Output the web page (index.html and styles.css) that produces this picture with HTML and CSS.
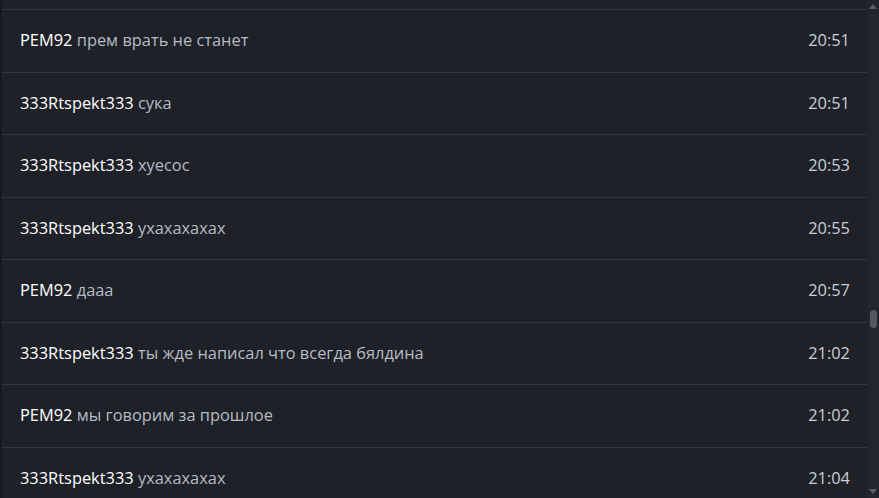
FILE: index.html
```html
<!DOCTYPE html>
<html lang="ru">

<head>
    <meta charset="UTF-8">
    <meta name="viewport" content="width=device-width, initial-scale=1.0">
    <title>Chat log</title>

    <link rel="stylesheet" href="styles.css">
</head>

<body>
    <main class="log">
        <ul class="messages">
            <li class="msg msg-cut"></li>
            <li class="msg"><span class="text"><b class="nick">PEM92</b> прем врать не станет</span><time class="time">20:51</time></li>
            <li class="msg"><span class="text"><b class="nick">333Rtspekt333</b> сука</span><time class="time">20:51</time></li>
            <li class="msg"><span class="text"><b class="nick">333Rtspekt333</b> хуесос</span><time class="time">20:53</time></li>
            <li class="msg"><span class="text"><b class="nick">333Rtspekt333</b> ухахахахах</span><time class="time">20:55</time></li>
            <li class="msg"><span class="text"><b class="nick">PEM92</b> дааа</span><time class="time">20:57</time></li>
            <li class="msg"><span class="text"><b class="nick">333Rtspekt333</b> ты жде написал что всегда бялдина</span><time class="time">21:02</time></li>
            <li class="msg"><span class="text"><b class="nick">PEM92</b> мы говорим за прошлое</span><time class="time">21:02</time></li>
            <li class="msg"><span class="text"><b class="nick">333Rtspekt333</b> ухахахахах</span><time class="time">21:04</time></li>
        </ul>

        <div class="scrollbar">
            <span class="arrow arrow-up"></span>
            <div class="track">
                <span class="thumb"></span>
            </div>
            <span class="arrow arrow-down"></span>
        </div>
    </main>
</body>

</html>
```

FILE: styles.css
```css
:root {
    --bg: #1f2129;
    --line: #33363e;
    --edge: #17191e;
}

html,
body {
    margin: 0;
    height: 100%;
    background: var(--bg);
    overflow: hidden;
}

.log {
    display: flex;
    height: 100vh;
    border-left: 2px solid var(--edge);
    font-family: "Open Sans", "Noto Sans", sans-serif;
    font-size: 16.4px;
}

.messages {
    flex: 1;
    margin: 0;
    padding: 0;
    list-style: none;
}

.msg {
    display: flex;
    align-items: center;
    justify-content: space-between;
    height: 62.5px;
    padding: 0 17px 2px 18px;
    border-bottom: 1px solid var(--line);
    box-sizing: border-box;
}

.msg-cut {
    height: 10px;
}

.text {
    color: #b6bbc3;
}

.nick {
    font-weight: normal;
    color: #ffffff;
}

.time {
    color: #c9cdd4;
}

.scrollbar {
    display: flex;
    flex-direction: column;
    align-items: center;
    width: 12px;
    background: #23252c;
}

.arrow {
    width: 0;
    height: 0;
    margin: 4px 0;
    border-left: 4px solid transparent;
    border-right: 4px solid transparent;
}

.arrow-up {
    border-bottom: 5px solid #5b5e64;
}

.arrow-down {
    border-top: 5px solid #5b5e64;
}

.track {
    flex: 1;
    display: flex;
    flex-direction: column;
    justify-content: flex-end;
    padding-bottom: 157px;
}

.thumb {
    width: 7px;
    height: 18px;
    border-radius: 4px;
    background: #55585e;
}
```
